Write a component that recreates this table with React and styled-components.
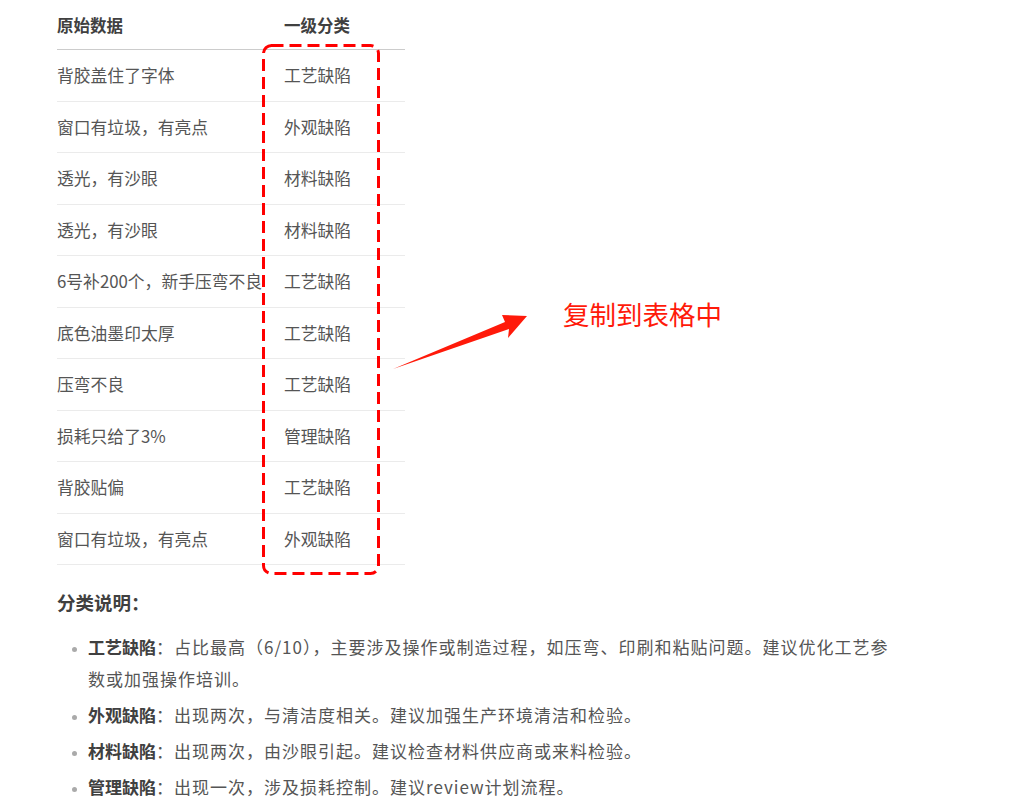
import React from 'react'
import styled, { createGlobalStyle } from 'styled-components'

const rows = [
  ['背胶盖住了字体', '工艺缺陷'],
  ['窗口有垃圾，有亮点', '外观缺陷'],
  ['透光，有沙眼', '材料缺陷'],
  ['透光，有沙眼', '材料缺陷'],
  ['6号补200个，新手压弯不良', '工艺缺陷'],
  ['底色油墨印太厚', '工艺缺陷'],
  ['压弯不良', '工艺缺陷'],
  ['损耗只给了3%', '管理缺陷'],
  ['背胶贴偏', '工艺缺陷'],
  ['窗口有垃圾，有亮点', '外观缺陷'],
]

const notes = [
  ['工艺缺陷', '：占比最高（6/10），主要涉及操作或制造过程，如压弯、印刷和粘贴问题。建议优化工艺参数或加强操作培训。'],
  ['外观缺陷', '：出现两次，与清洁度相关。建议加强生产环境清洁和检验。'],
  ['材料缺陷', '：出现两次，由沙眼引起。建议检查材料供应商或来料检验。'],
  ['管理缺陷', '：出现一次，涉及损耗控制。建议review计划流程。'],
]

const App = () => {
  return (
    <>
      <GlobalStyle />
      <Page>
        <Table>
          <thead>
            <tr>
              <HeadCell>原始数据</HeadCell>
              <HeadCell>一级分类</HeadCell>
            </tr>
          </thead>
          <tbody>
            {rows.map(([raw, cat], i) => (
              <Row key={i}>
                <Cell>{raw}</Cell>
                <Cell>{cat}</Cell>
              </Row>
            ))}
          </tbody>
        </Table>

        <SectionTitle>分类说明：</SectionTitle>
        <NoteList>
          {notes.map(([name, text]) => (
            <NoteItem key={name}>
              <NoteName>{name}</NoteName>
              <NoteText>{text}</NoteText>
            </NoteItem>
          ))}
        </NoteList>

        {/* red annotation drawn over the table */}
        <Annotation viewBox="0 0 1024 800" width="1024" height="800">
          <rect
            x="263.5"
            y="45.5"
            width="115"
            height="528"
            rx="8"
            fill="none"
            stroke="#ff0000"
            strokeWidth="3"
            strokeDasharray="12 6"
          />
          <polygon
            points="393,369 505,322 502,315 527,316 508,338 509,329"
            fill="#ff1a0a"
          />
        </Annotation>
        <AnnotationLabel>复制到表格中</AnnotationLabel>
      </Page>
    </>
  )
}

const GlobalStyle = createGlobalStyle`
  body {
    margin: 0;
    background: #ffffff;
    font-family: "Noto Sans CJK SC", "Noto Sans", sans-serif;
    color: #555555;
  }
`

const Page = styled.div`
  position: relative;
  width: 1024px;
  height: 800px;
  overflow: hidden;
  padding-left: 57px;
  box-sizing: border-box;
`

const Table = styled.table`
  width: 348px;
  border-collapse: collapse;
  font-size: 16.8px;
  table-layout: fixed;

  & th:first-child,
  & td:first-child {
    width: 227px;
  }
`

const HeadCell = styled.th`
  height: 49px;
  padding: 0;
  text-align: left;
  font-size: 16.5px;
  font-weight: 700;
  color: #404040;
  border-bottom: 1px solid #cccccc;
  vertical-align: middle;
`

const Row = styled.tr`
  border-bottom: 1px solid #ebebeb;
`

const Cell = styled.td`
  height: 50.5px;
  padding: 0;
  white-space: nowrap;
  overflow: visible;
  color: #555555;
  vertical-align: middle;
`

const SectionTitle = styled.div`
  margin-top: 24px;
  font-size: 18.5px;
  font-weight: 700;
  color: #404040;
  line-height: 26px;
`

const NoteList = styled.ul`
  margin: 16px 0 0;
  padding: 0 0 0 31px;
  width: 812px;
  font-size: 17px;
  line-height: 32px;
`

const NoteItem = styled.li`
  margin-bottom: 4px;
  color: #555555;

  &::marker {
    color: #aaaaaa;
    font-size: 12px;
  }
`

const NoteName = styled.strong`
  color: #404040;
  font-weight: 700;
`

const NoteText = styled.span`
  letter-spacing: 1px;
`

const Annotation = styled.svg`
  position: absolute;
  left: 0;
  top: 0;
  pointer-events: none;
`

const AnnotationLabel = styled.div`
  position: absolute;
  left: 563px;
  top: 295px;
  font-size: 26.5px;
  line-height: 38px;
  color: #ff1a0a;
`

export default App
